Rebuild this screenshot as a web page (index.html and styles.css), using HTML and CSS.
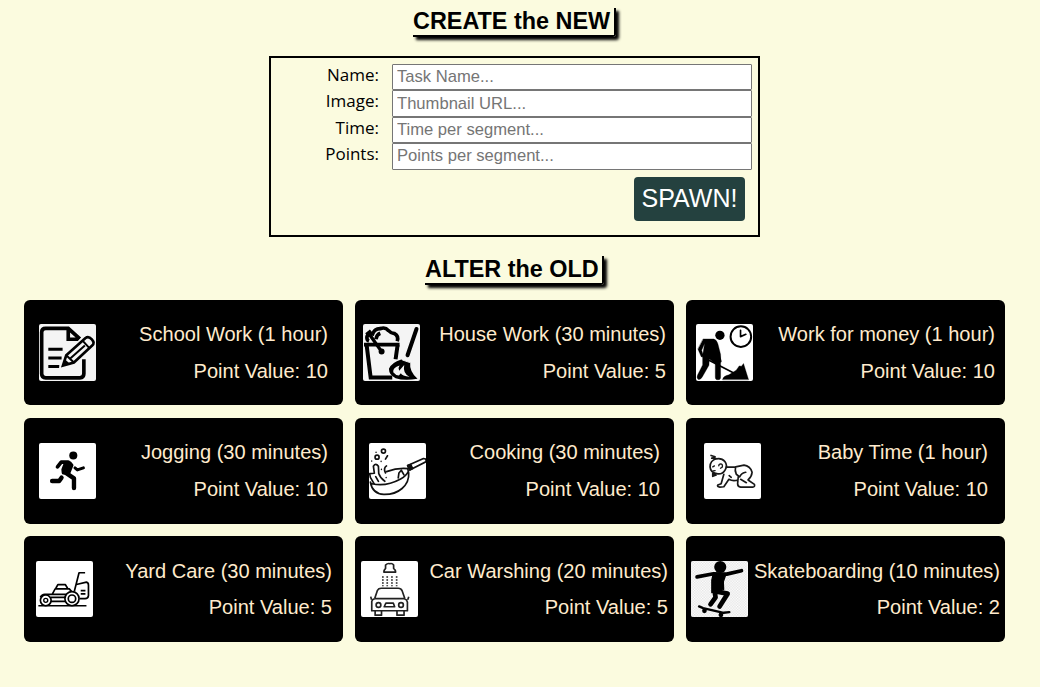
FILE: index.html
```
<!DOCTYPE html>
<html lang="en">
<head>
<meta charset="utf-8">
<title>Tasks</title>
<link rel="stylesheet" href="styles.css">
</head>
<body>
<main class="page">
  <h2 class="heading heading-create">CREATE the NEW</h2>
  <form class="task-form">
    <div class="field"><label for="name">Name:</label><input id="name" placeholder="Task Name..."></div>
    <div class="field"><label for="image">Image:</label><input id="image" placeholder="Thumbnail URL..."></div>
    <div class="field"><label for="time">Time:</label><input id="time" placeholder="Time per segment..."></div>
    <div class="field"><label for="points">Points:</label><input id="points" placeholder="Points per segment..."></div>
    <button class="spawn" type="button">SPAWN!</button>
  </form>
  <h2 class="heading heading-alter">ALTER the OLD</h2>
  <section class="tasks">
    <article class="card inset-15">
      <svg class="thumb grey" viewBox="15 18 168 170" fill="none" stroke="#000" stroke-width="9">
        <path d="M149 124V168Q149 180 137 180H34Q22 180 22 168V43Q22 31 34 31H102L137 63M102 31V64H133" stroke-width="11"/>
        <path d="M42 94H85M42 120H82M42 146H75"/>
        <path d="M86 143L96 112L154 60Q163 53 173 64Q183 75 174 83L119 134Z" fill="#f4f4f4" stroke="#f4f4f4" stroke-width="17"/>
        <path d="M86 143L96 112L154 60Q163 53 173 64Q183 75 174 83L119 134Z" fill="#f4f4f4" stroke-width="8"/>
        <path d="M96 112L119 134M145 68L165 90M108 122L152 83" stroke-width="6"/>
        <path d="M84 145L92 124L106 137Z" fill="#000" stroke="none"/>
      </svg>
      <div class="info"><p>School Work (1 hour)</p><p>Point Value: 10</p></div>
    </article>
    <article class="card inset-8">
      <svg class="thumb grey" viewBox="15 18 168 170" fill="none" stroke="#000" stroke-width="11">
        <path d="M17 80H124" stroke-width="11"/>
        <path d="M25 82L37 179H102M118 82L112 124" stroke-width="12"/>
        <path d="M32 69Q24 66 26 56Q29 46 43 48Q49 31 67 32Q80 26 91 38Q98 46 109 47Q122 54 117 70M53 64Q55 50 66 46"/>
        <path d="M29 43L70 101M24 50L38 38" stroke-width="10"/><circle cx="70" cy="101" r="9" fill="#000" stroke="none"/>
        <path d="M175 33L148 112" stroke-width="12" stroke-linecap="round"/>
        <path d="M129 125L156 134Q153 161 178 183Q137 189 112 181Q92 172 92 153Q100 134 129 125Z" fill="#000" stroke="none"/>
        <path d="M132 126L155 134" stroke="#f4f4f4" stroke-width="3"/>
        <path d="M105 163Q103 149 124 143Q118 151 123 159L138 141Q133 166 154 177Q131 174 128 166L122 173Q112 172 105 163Z" fill="#f4f4f4" stroke="none"/>
      </svg>
      <div class="info"><p>House Work (30 minutes)</p><p>Point Value: 5</p></div>
    </article>
    <article class="card inset-10">
      <svg class="thumb" viewBox="18 18 168 170" fill="#000" stroke="#000" stroke-linejoin="round" stroke-linecap="round">
        <circle cx="89" cy="52" r="14" stroke="none"/>
        <path d="M39 63H70Q79 65 83 78L91 110V178Q91 186 83 186Q75 186 75 178V137L57 123L56 142L35 179Q29 187 23 184Q18 180 22 171L37 141V112L43 77L34 97L40 116L33 117L23 94Z" stroke-width="1"/>
        <path d="M40 119L132 166" stroke-width="5"/>
        <path d="M80 92L90 130" stroke-width="8"/>
        <path d="M97 185Q99 174 116 171L138 157L147 144L154 145L160 137L175 185Z" stroke-width="1"/>
        <circle cx="152" cy="56" r="31" fill="none" stroke-width="6"/><path d="M151 37V56L167 49" fill="none" stroke-width="5"/>
      </svg>
      <div class="info"><p>Work for money (1 hour)</p><p>Point Value: 10</p></div>
    </article>
    <article class="card inset-15">
      <svg class="thumb" viewBox="15 18 168 168" fill="none" stroke="#000" stroke-linejoin="round" stroke-linecap="round">
        <circle cx="117" cy="55" r="12" fill="#000" stroke="none"/>
        <path d="M70 89L81 75H102" stroke-width="11"/>
        <path d="M94 76L107 77L113 84L103 109L87 107L86 97Z" fill="#000" stroke-width="9"/>
        <path d="M95 107L119 123V152" stroke-width="13"/>
        <path d="M82 121L75 131H54" stroke-width="13"/>
        <path d="M122 92L129 98L147 92" stroke-width="9"/>
      </svg>
      <div class="info"><p>Jogging (30 minutes)</p><p>Point Value: 10</p></div>
    </article>
    <article class="card inset-14">
      <svg class="thumb" viewBox="18 18 168 168" fill="none" stroke="#111" stroke-width="5" stroke-linecap="round" stroke-linejoin="round">
        <path d="M22 134Q28 169 62 171C105 172 139 144 136 107L133 94Q103 91 70 103M27 139Q68 149 112 125Q129 116 135 102"/>
        <path d="M133 85L180 64Q190 64 187 74L139 98Z"/><path d="M133 85L139 98L148 94L142 82Z" fill="#111"/>
        <path d="M33 139L22 120L20 109L34 108L31 87Q38 76 46 87L47 109Q52 124 65 132M38 118L46 132"/>
        <path d="M105 122L107 107L114 99L122 113M70 86Q60 93 67 107M67 66L73 56"/>
        <circle cx="42" cy="60" r="6"/><circle cx="61" cy="42" r="6"/>
        <path d="M26 71V72M39 45V46M54 72V73M55 96V97M69 120V121" stroke-width="4"/>
      </svg>
      <div class="info"><p>Cooking (30 minutes)</p><p>Point Value: 10</p></div>
    </article>
    <article class="card inset-17">
      <svg class="thumb" viewBox="18 18 168 168" fill="none" stroke="#181818" stroke-width="5" stroke-linecap="round" stroke-linejoin="round">
        <path d="M55 65Q71 62 80 73Q89 85 81 98Q74 111 59 110Q37 107 36 89Q36 70 55 65L45 61M39 55L51 59M41 63H47"/>
        <path d="M44 109V117L54 113Z" fill="#181818"/>
        <path d="M62 86Q62 80 68 80Q75 82 72 90L67 93M44 89L49 86M45 101L51 100" stroke-width="4"/>
        <path d="M84 90H112M77 111L69 139L59 143Q56 148 65 149L77 148L92 126Q104 133 119 128M112 89L137 84Q155 86 161 105Q160 118 149 128L168 141Q170 149 163 149H127Q118 148 118 139M112 89Q109 99 114 111L124 119Q130 106 142 105M120 117L118 139M127 126L144 136M93 115L99 120"/>
      </svg>
      <div class="info"><p>Baby Time (1 hour)</p><p>Point Value: 10</p></div>
    </article>
    <article class="card inset-12">
      <svg class="thumb" viewBox="18 18 168 168" fill="none" stroke="#000" stroke-width="5" stroke-linejoin="round">
        <path d="M25 151H168" stroke-width="4"/>
        <path d="M31 126Q35 117 44 117H109M66 117L75 101H117L124 109M77 99L83 88H105L112 99M62 126H105M62 138H105"/>
        <circle cx="47" cy="135" r="16" fill="#fff"/><circle cx="47" cy="135" r="6" stroke-width="4"/>
        <circle cx="125" cy="130" r="21" fill="#fff"/><circle cx="125" cy="130" r="11"/>
        <path d="M164 53H146L132 108M138 88L168 81Q174 82 174 90V121Q173 130 164 130H148M151 106H165M151 116H165"/>
      </svg>
      <div class="info"><p>Yard Care (30 minutes)</p><p>Point Value: 5</p></div>
    </article>
    <article class="card inset-6">
      <svg class="thumb" viewBox="15 18 168 168" fill="none" stroke="#222" stroke-width="5" stroke-linejoin="round">
        <path d="M83 51Q83 45 88 40V30Q94 24 101 26Q108 24 112 30V40Q118 45 118 51Z"/>
        <path d="M80 63V93M93 63V93M107 63V93M121 63V93" stroke-dasharray="5 4"/>
        <path d="M47 166V138Q48 132 56 130H144Q152 133 153 140V166ZM56 129L64 105Q67 99 75 99H126Q134 99 137 106L145 129M46 133L44 124M154 133L157 124M57 167V179H76V167M122 167V179H143V167M84 154L89 143H111L115 154Z"/>
        <circle cx="67" cy="149" r="7"/><circle cx="134" cy="149" r="7"/>
      </svg>
      <div class="info"><p>Car Warshing (20 minutes)</p><p>Point Value: 5</p></div>
    </article>
    <article class="card inset-5">
      <svg class="thumb" viewBox="15 18 168 168" fill="none" stroke="#000" stroke-linecap="round" stroke-linejoin="round">
        <defs><pattern id="check" width="8" height="8" patternUnits="userSpaceOnUse"><path d="M0 0H4V4H0ZM4 4H8V8H4Z" fill="#e3e3e3" stroke="none"/></pattern></defs>
        <path d="M15 18H183V186H15Z" fill="url(#check)" stroke="none"/>
        <circle cx="102" cy="36" r="18" fill="#000" stroke="none"/>
        <path d="M33 65L82 56L121 57L165 47" stroke-width="11"/>
        <path d="M81 57L119 57L111 80L112 103L77 112V75Z" fill="#000" stroke-width="4"/>
        <path d="M85 106L88 126L73 147M92 109L124 115L100 153" stroke-width="14"/>
        <path d="M39 153L51 158L112 172L129 170" stroke-width="7"/><circle cx="55" cy="166" r="7" fill="#000" stroke="none"/><circle cx="104" cy="178" r="7" fill="#000" stroke="none"/>
      </svg>
      <div class="info"><p>Skateboarding (10 minutes)</p><p>Point Value: 2</p></div>
    </article>
  </section>
</main>
</body>
</html>
```
FILE: styles.css
```
* { box-sizing: border-box; }
body { margin: 0; background: #fbfbdf; color: #000; font-family: "Liberation Sans", Arial, sans-serif; }
.page { display: flex; flex-direction: column; align-items: center; width: 1029px; padding-top: 8px; }
.heading {
  margin: 0; height: 29px; font-size: 23.4px; line-height: 26px; font-weight: bold;
  white-space: nowrap; border-right: 2px solid #000; border-bottom: 2px solid #000;
  border-bottom-right-radius: 3px; box-shadow: 3px 3px 3px #000;
}
.heading-create { width: 203px; }
.heading-alter { width: 179px; margin-top: 19px; }
.task-form { width: 491px; height: 181px; margin-top: 19px; padding: 6px; border: 2px solid #000; display: flex; flex-direction: column; }
.field { display: flex; height: 26.4px; }
.field label {
  width: 102px; margin-right: 13px; text-align: right; line-height: 22px;
  font-family: "Trebuchet MS", "Open Sans", sans-serif; font-size: 17px;
}
.field input { width: 360px; height: 26.4px; padding: 1px 4px; border: 1px solid #767676; border-radius: 1px; background: #fff; font: 16.6px "Liberation Sans", Arial, sans-serif; }
.field input::placeholder { color: #757575; }
.spawn { align-self: flex-end; width: 111px; height: 44px; margin: 7.4px 7px 0 0; padding: 0; border: 0; border-radius: 4px; background: #24413f; color: #fff; font: 25px "Liberation Sans", Arial, sans-serif; }
.tasks { display: grid; grid-template-columns: repeat(3, 319px); grid-auto-rows: 105.4px; gap: 12.8px 12px; margin-top: 15px; }
.card { display: flex; align-items: center; justify-content: space-between; border-radius: 6px; background: #000; color: #ffebcd; font-size: 20.05px; }
.thumb { width: 56.5px; height: 56.5px; border-radius: 2px; background: #fff; }
.grey { background: #f4f4f4; }
.info { text-align: right; white-space: nowrap; }
.info p { margin: 0; line-height: 36.4px; }
.inset-5 { padding: 0 5px; }
.inset-6 { padding: 0 6px; }
.inset-8 { padding: 0 8px; }
.inset-10 { padding: 0 10px; }
.inset-12 { padding: 0 11px 0 12px; }
.inset-14 { padding: 0 14px; }
.inset-15 { padding: 0 15px; }
.inset-17 { padding: 0 17px 0 18px; }
```
